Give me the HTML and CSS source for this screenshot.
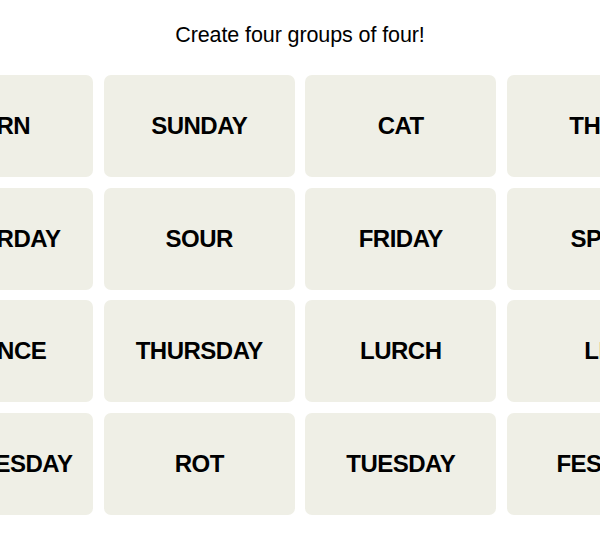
FILE: index.html
```html
<!DOCTYPE html>
<html lang="en">
<head>
    <meta charset="UTF-8">
    <meta name="viewport" content="width=device-width, initial-scale=1.0">
    <title>Connections</title>
    <link rel="stylesheet" href="styles.css">
</head>
<body>
    <div class="game">
        <p class="prompt">Create four groups of four!</p>

        <!-- 4 x 4 word board -->
        <div class="board">
            <button class="tile">TURN</button>
            <button class="tile">SUNDAY</button>
            <button class="tile">CAT</button>
            <button class="tile">THEM</button>

            <button class="tile">SATURDAY</button>
            <button class="tile">SOUR</button>
            <button class="tile">FRIDAY</button>
            <button class="tile">SPOT</button>

            <button class="tile">FRANCE</button>
            <button class="tile">THURSDAY</button>
            <button class="tile">LURCH</button>
            <button class="tile">LIE</button>

            <button class="tile">WEDNESDAY</button>
            <button class="tile">ROT</button>
            <button class="tile">TUESDAY</button>
            <button class="tile">FESTER</button>
        </div>
    </div>
</body>
</html>
```

FILE: styles.css
```css
/* base */
body {
    margin: 0;
    background-color: #fff;
    font-family: "Liberation Sans", Arial, sans-serif;
    color: #000;
}
.game {
    display: flex;
    flex-direction: column;
    align-items: center;
    overflow: hidden;
    height: 533px;
}

.prompt {
    margin: 21px 0 0;
    font-size: 21.5px;
    line-height: 28px;
    letter-spacing: -0.1px;
    text-align: center;
}

/* board */
.board {
    display: grid;
    grid-template-columns: repeat(4, 191px);
    grid-auto-rows: 102px;
    column-gap: 10.5px;
    row-gap: 10.5px;
    margin-top: 26px;
    flex-shrink: 0;
}
.tile {
    border: none;
    border-radius: 7px;
    background-color: #efefe6;
    color: #000;
    font-family: "Liberation Sans", Arial, sans-serif;
    font-size: 24px;
    font-weight: bold;
    letter-spacing: -0.5px;
    padding: 0;
    cursor: pointer;
}
```
